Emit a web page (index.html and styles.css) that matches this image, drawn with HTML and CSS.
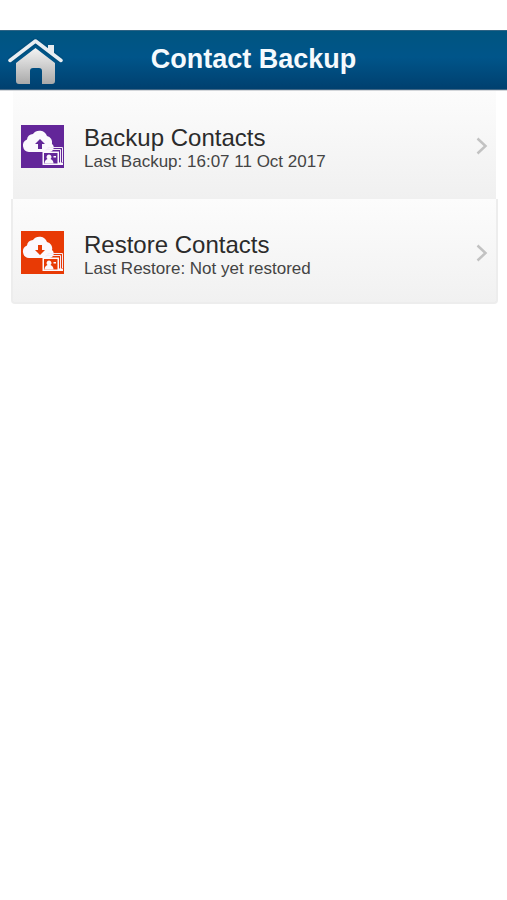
FILE: index.html
```html
<!DOCTYPE html>
<html lang="en">
<head>
  <meta charset="UTF-8">
  <meta name="viewport" content="width=device-width, initial-scale=1.0">
  <title>Contact Backup</title>
  <link rel="stylesheet" href="styles.css">
</head>
<body>
  <header class="topbar">
    <a class="home" href="#" aria-label="Home">
      <svg width="56" height="48" viewBox="0 0 56 48">
        <defs>
          <linearGradient id="metal" x1="0" y1="0" x2="0" y2="1">
            <stop offset="0" stop-color="#f4f4f4"/>
            <stop offset="1" stop-color="#a9a9a9"/>
          </linearGradient>
        </defs>
        <path d="M27.500 10 47 25v18q0 3-3 3H34V33q0-3-3-3h-6q-3 0-3 3v13H11q-3 0-3-3V25z" fill="url(#metal)"/>
        <path d="M2 22.500 27.500 3 53 22.500" fill="none" stroke="#00507f" stroke-width="7"/>
        <path d="M40 7h6v10.500l-6-4.500z" fill="#e6eaee"/>
        <path d="M2 22.500 27.500 3 53 22.500" fill="none" stroke="#e9eef2" stroke-width="3.5" stroke-linecap="round" stroke-linejoin="round"/>
      </svg>
    </a>
    <h1>Contact Backup</h1>
  </header>

  <main class="list">
    <a class="row" href="#">
      <svg class="tile tile-backup" viewBox="0 0 43 43">
        <path class="white" d="M8 27a6.500 6.500 0 0 1-2-12.500A6 6 0 0 1 12 9a8 8 0 0 1 14 2 6.500 6.500 0 0 1 5 8 4.500 4.500 0 0 1-3 8z"/>
        <path class="ink" d="M19 14l5 5h-3v5h-4v-5h-3z"/>
        <path class="card" d="M27 24V22.500h14.500V37M25 26v-1.500h14.500V38"/>
        <path class="white" d="M21.500 26.500H38V40H21.500z"/>
        <path class="ink" d="M23 28h13.500v10.500H23z"/>
        <path class="white" d="M28 29.500a2.500 2.500 0 0 1 1.500 4.500q3 1 3 4.500h-9q0-3.500 3-4.500a2.500 2.500 0 0 1 1.500-4.500zM32.500 31H35v1.500h-2.500zM38 37.500h4V40h-4z"/>
      </svg>
      <div class="text">
        <h2>Backup Contacts</h2>
        <p>Last Backup: 16:07 11 Oct 2017</p>
      </div>
      <svg class="chevron" viewBox="0 0 12 18"><path d="M1.500 1.500 9.500 9l-8 7.500"/></svg>
    </a>
    <a class="row row-raised" href="#">
      <svg class="tile tile-restore" viewBox="0 0 43 43">
        <path class="white" d="M8 27a6.500 6.500 0 0 1-2-12.500A6 6 0 0 1 12 9a8 8 0 0 1 14 2 6.500 6.500 0 0 1 5 8 4.500 4.500 0 0 1-3 8z"/>
        <path class="ink" d="M19 24l5-5h-3v-5h-4v5h-3z"/>
        <path class="card" d="M27 24V22.500h14.500V37M25 26v-1.500h14.500V38"/>
        <path class="white" d="M21.500 26.500H38V40H21.500z"/>
        <path class="ink" d="M23 28h13.500v10.500H23z"/>
        <path class="white" d="M28 29.500a2.500 2.500 0 0 1 1.500 4.500q3 1 3 4.500h-9q0-3.500 3-4.500a2.500 2.500 0 0 1 1.500-4.500zM32.500 31H35v1.500h-2.500zM38 37.500h4V40h-4z"/>
      </svg>
      <div class="text">
        <h2>Restore Contacts</h2>
        <p>Last Restore: Not yet restored</p>
      </div>
      <svg class="chevron" viewBox="0 0 12 18"><path d="M1.500 1.500 9.500 9l-8 7.500"/></svg>
    </a>
  </main>
</body>
</html>
```
FILE: styles.css
```css
body {
  margin: 0;
  padding-top: 30px;
  background: #fff;
  color: #2b2b2b;
  font-family: "Liberation Sans", Arial, sans-serif;
}
h1, h2, p {
  margin: 0;
}
svg {
  display: block;
}

.topbar {
  display: grid;
  grid-template-columns: 56px 1fr 56px;
  align-items: center;
  height: 60px;
  padding: 0 8px;
  box-sizing: border-box;
  background: linear-gradient(#005580, #00558a 45%, #00406f);
  border-top: 1px solid #2f6485;
  border-bottom: 1px solid #3f6685;
}
.home {
  padding-top: 4px;
}
.topbar h1 {
  padding-bottom: 2px;
  color: #f5fafd;
  font-size: 27px;
  line-height: 32px;
  text-align: center;
}

.list {
  padding: 0 9px 0 11px;
  border-top: 1px solid #d3d6da;
}
.row {
  display: flex;
  align-items: center;
  height: 108px;
  margin: 0 2px;
  padding: 2px 8px 0;
  box-sizing: border-box;
  background: linear-gradient(#fcfcfc, #f0f0f0);
  color: inherit;
  text-decoration: none;
}
.row-raised {
  height: 105px;
  margin: 0;
  padding-top: 4px;
  border: 2px solid #ededed;
  border-top: 0;
  border-radius: 0 0 4px 4px;
  background: linear-gradient(#fcfcfc, #f1f1f1);
}

.tile {
  width: 43px;
  height: 43px;
  margin-right: 20px;
}
.tile-backup {
  background: #632699;
  color: #632699;
}
.tile-restore {
  background: #e83a05;
  color: #e83a05;
}
.white {
  fill: #fbf8fd;
}
.ink {
  fill: currentColor;
}
.card {
  fill: none;
  stroke: #f3ebf7;
}

.text {
  flex: 1;
  padding-top: 6px;
}
.text h2 {
  font-size: 24px;
  font-weight: 400;
  line-height: 26px;
}
.text p {
  color: #444;
  font-size: 17px;
  line-height: 22px;
}

.chevron {
  width: 12px;
  height: 18px;
}
.chevron path {
  fill: none;
  stroke: #c2c2c2;
  stroke-width: 2.5;
}
```
